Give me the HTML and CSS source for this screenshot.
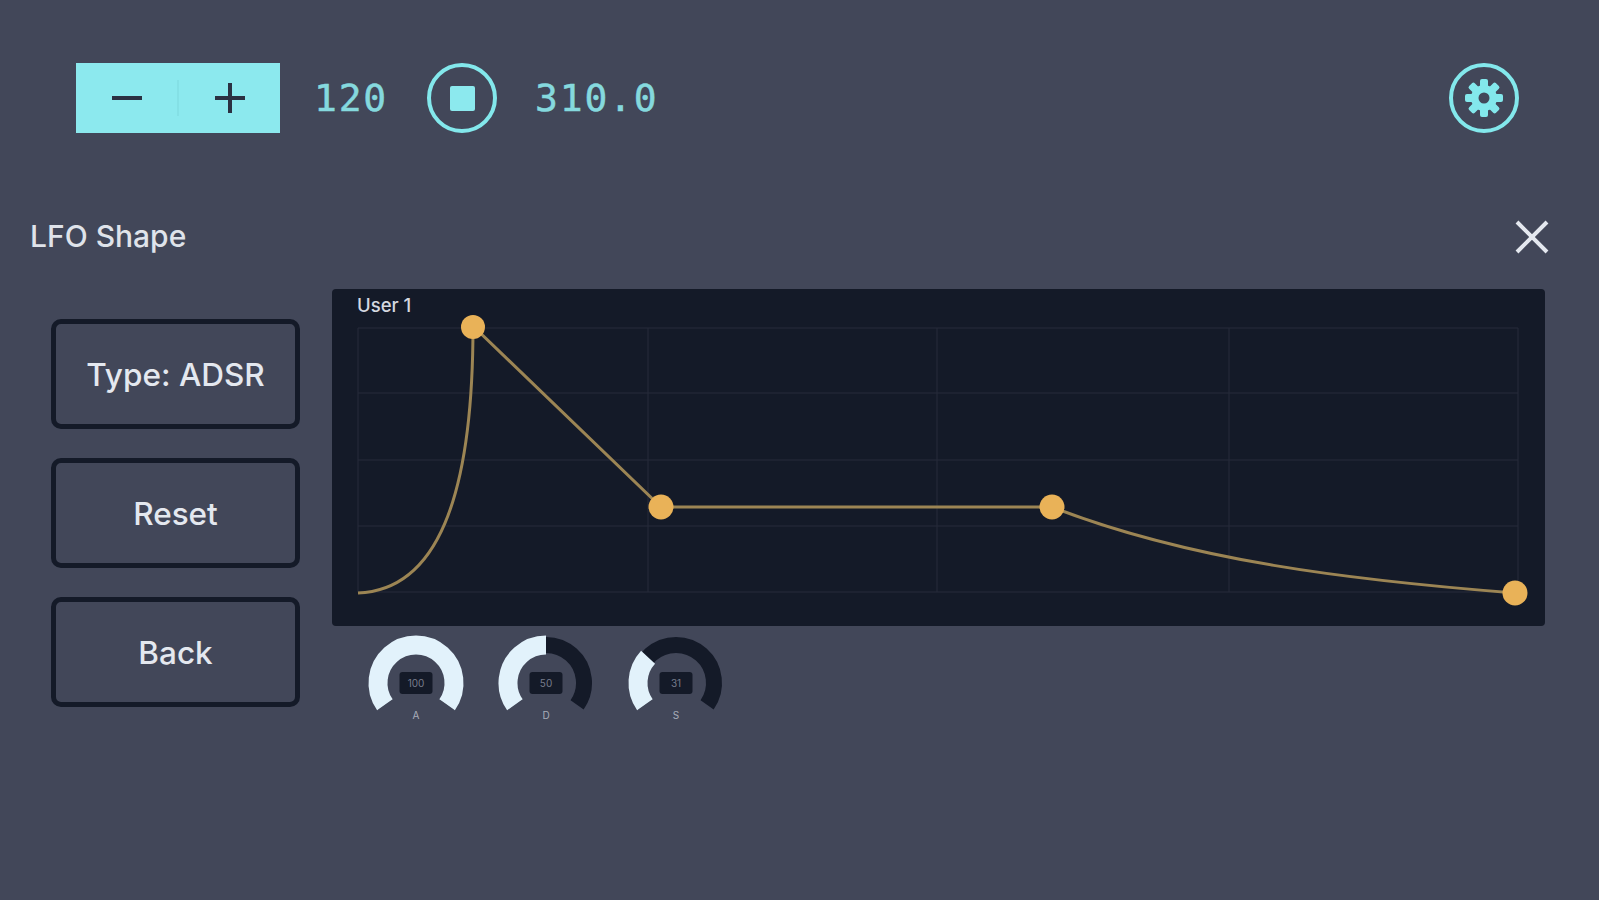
FILE: index.html
```html
<!DOCTYPE html>
<html>
<head>
  <title>LFO Shape</title>
  <meta charset="UTF-8">
  <link rel="stylesheet" href="styles.css">
</head>
<body>
  <div class="topbar">
    <div class="stepper">
      <button class="step-btn" type="button" aria-label="Decrease">
        <svg width="32" height="32" viewBox="0 0 32 32"><path d="M1 16H31" /></svg>
      </button>
      <span class="step-divider"></span>
      <button class="step-btn" type="button" aria-label="Increase">
        <svg width="32" height="32" viewBox="0 0 32 32"><path d="M1 16H31M16 1V31" /></svg>
      </button>
    </div>
    <span class="readout bpm">120</span>
    <button class="round-btn stop" type="button" aria-label="Stop"><span class="stop-square"></span></button>
    <span class="readout position">310.0</span>
    <button class="round-btn settings" type="button" aria-label="Settings">
      <svg width="40" height="40" viewBox="0 0 40 40">
        <rect x="16" y="1" width="8" height="38" rx="2" />
        <rect x="16" y="1" width="8" height="38" rx="2" transform="rotate(45 20 20)" />
        <rect x="16" y="1" width="8" height="38" rx="2" transform="rotate(90 20 20)" />
        <rect x="16" y="1" width="8" height="38" rx="2" transform="rotate(135 20 20)" />
        <circle cx="20" cy="20" r="13" />
        <circle class="gear-hole" cx="20" cy="20" r="5.5" />
      </svg>
    </button>
  </div>

  <div class="panel-head">
    <h1 class="panel-title">LFO Shape</h1>
    <button class="close-btn" type="button" aria-label="Close">
      <svg width="34" height="34" viewBox="0 0 34 34"><path d="M2 2L32 32M32 2L2 32" /></svg>
    </button>
  </div>

  <div class="panel-body">
    <div class="side-buttons">
      <button class="side-btn" type="button">Type: ADSR</button>
      <button class="side-btn" type="button">Reset</button>
      <button class="side-btn" type="button">Back</button>
    </div>

    <div class="editor">
      <div class="chart">
        <svg class="chart-svg" width="1213" height="337" viewBox="1 0 1213 337">
          <g class="grid">
            <path d="M27 39H1187M27 104H1187M27 171H1187M27 237H1187M27 303H1187" />
            <path d="M27 39V303M317 39V303M606 39V303M898 39V303M1187 39V303" />
          </g>
          <path class="curve" d="M27 304C105 301 142 211 142 37L330 218H721C860 272 1019 291 1184 304" />
          <g class="dots">
            <circle cx="142" cy="38" r="12" />
            <circle cx="330" cy="218" r="12.5" />
            <circle cx="721" cy="218" r="12.5" />
            <circle cx="1184" cy="304" r="12.5" />
          </g>
          <text class="chart-label" x="26" y="23">User 1</text>
        </svg>
      </div>

      <div class="knobs">
        <div class="knob">
          <svg width="100" height="77" viewBox="0 0 100 77">
            <path class="knob-track" d="M18.9 71.8A38 38 0 1 1 81.1 71.8" />
            <path class="knob-value" pathLength="100" stroke-dasharray="100 100" d="M18.9 71.8A38 38 0 1 1 81.1 71.8" />
            <rect class="knob-box" x="33.5" y="39" width="33" height="22" rx="3" />
            <text class="knob-num" x="50" y="53.5">100</text>
          </svg>
          <span class="knob-name">A</span>
        </div>
        <div class="knob">
          <svg width="100" height="77" viewBox="0 0 100 77">
            <path class="knob-track" d="M18.9 71.8A38 38 0 1 1 81.1 71.8" />
            <path class="knob-value" pathLength="100" stroke-dasharray="50 100" d="M18.9 71.8A38 38 0 1 1 81.1 71.8" />
            <rect class="knob-box" x="33.5" y="39" width="33" height="22" rx="3" />
            <text class="knob-num" x="50" y="53.5">50</text>
          </svg>
          <span class="knob-name">D</span>
        </div>
        <div class="knob">
          <svg width="100" height="77" viewBox="0 0 100 77">
            <path class="knob-track" d="M18.9 71.8A38 38 0 1 1 81.1 71.8" />
            <path class="knob-value" pathLength="100" stroke-dasharray="31 100" d="M18.9 71.8A38 38 0 1 1 81.1 71.8" />
            <rect class="knob-box" x="33.5" y="39" width="33" height="22" rx="3" />
            <text class="knob-num" x="50" y="53.5">31</text>
          </svg>
          <span class="knob-name">S</span>
        </div>
      </div>
    </div>
  </div>
</body>
</html>
```

FILE: styles.css
```css
body {
  margin: 0;
  padding: 0;
  height: 900px;
  overflow: hidden;
  background-color: #424759;
  font-family: 'Inter', sans-serif;
  color: #e4e8ef;
}
button {
  padding: 0;
  background: none;
  border: none;
  font-family: inherit;
  color: inherit;
}
.topbar {
  display: flex;
  align-items: center;
  height: 70px;
  padding: 63px 80px 0 76px;
}
.stepper {
  display: flex;
  align-items: center;
  width: 204px;
  height: 70px;
  background-color: #8ce9ee;
}
.step-btn {
  display: flex;
  flex: 1;
  align-items: center;
  justify-content: center;
}
.step-btn svg path {
  fill: none;
  stroke: #2b3142;
  stroke-width: 4;
}
.step-divider {
  width: 2px;
  height: 36px;
  background-color: #84e0e5;
}
.readout {
  font-family: 'DejaVu Sans Mono', monospace;
  font-size: 38px;
  letter-spacing: 1.8px;
  -webkit-text-stroke: 0.5px #85d9de;
  color: #85d9de;
}
.bpm {
  margin-left: 34px;
}
.position {
  margin-left: 38px;
}
.round-btn {
  display: flex;
  align-items: center;
  justify-content: center;
  box-sizing: border-box;
  width: 70px;
  height: 70px;
  border: 4px solid #83e8ec;
  border-radius: 50%;
}
.stop {
  margin-left: 39px;
}
.stop-square {
  width: 25px;
  height: 25px;
  border-radius: 2px;
  background-color: #8ce9ee;
}
.settings {
  margin-left: auto;
}
.settings svg {
  fill: #83e8ec;
}
.settings svg .gear-hole {
  fill: #424759;
}
.panel-head {
  display: flex;
  align-items: center;
  justify-content: space-between;
  height: 40px;
  margin-top: 84px;
  padding: 0 50px 0 30px;
}
.panel-title {
  margin: 0 0 2px;
  font-size: 30px;
  font-weight: 500;
  color: #dfe3ea;
}
.close-btn {
  display: flex;
}
.close-btn svg path {
  fill: none;
  stroke: #e4e8ef;
  stroke-width: 4;
}
.panel-body {
  display: flex;
  align-items: flex-start;
  margin-top: 32px;
  padding: 0 54px 0 51px;
}
.side-buttons {
  display: flex;
  flex-direction: column;
  gap: 29px;
  width: 249px;
  margin-top: 30px;
}
.side-btn {
  box-sizing: border-box;
  height: 110px;
  border: 5px solid #141a28;
  border-radius: 10px;
  font-size: 31.5px;
  font-weight: 500;
  color: #e4e8ef;
}
.editor {
  flex: 1;
  margin-left: 32px;
}
.chart {
  height: 337px;
  border-radius: 4px;
  background-color: #141a28;
}
.chart-svg {
  display: block;
}
.grid path {
  fill: none;
  stroke: #262b3a;
  stroke-width: 1;
}
.curve {
  fill: none;
  stroke: #9c8554;
  stroke-width: 3;
}
.dots circle {
  fill: #e9b258;
}
.chart-label {
  font-size: 18.5px;
  font-weight: 500;
  fill: #d4d8e0;
}
.knobs {
  display: flex;
  gap: 30px;
  margin-top: 7px;
  padding-left: 34px;
}
.knob {
  display: flex;
  flex-direction: column;
  align-items: center;
  width: 100px;
}
.knob svg {
  display: block;
  overflow: visible;
}
.knob-track {
  fill: none;
  stroke: #141a28;
  stroke-width: 16;
}
.knob-value {
  fill: none;
  stroke: #e2f2fb;
  stroke-width: 19;
}
.knob-box {
  fill: #141a28;
}
.knob-num {
  font-size: 10px;
  fill: #777c8c;
  text-anchor: middle;
}
.knob-name {
  font-size: 10px;
  line-height: 10px;
  color: #a8adba;
}
```
